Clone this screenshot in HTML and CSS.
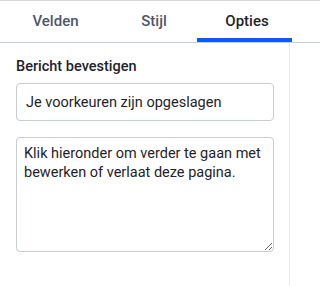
FILE: index.html
```html
<!DOCTYPE html>
<html lang="nl">
<head>
<meta charset="utf-8">
<link rel="stylesheet" href="styles.css">
</head>
<body>
<div class="panel">
  <div class="tabs">
    <div class="tab tab-velden">Velden</div>
    <div class="tab tab-stijl">Stijl</div>
    <div class="tab tab-opties active"><span class="tab-label">Opties</span></div>
  </div>
  <div class="content">
    <label class="field-label" for="msg">Bericht bevestigen</label>
    <input id="msg" class="text-input" type="text" value="Je voorkeuren zijn opgeslagen">
    <textarea class="text-area">Klik hieronder om verder te gaan met bewerken of verlaat deze pagina.</textarea>
  </div>
</div>
</body>
</html>
```
FILE: styles.css
```css
html, body {
  margin: 0;
  padding: 0;
  background: #ffffff;
  overflow: hidden;
}
body {
  font-family: Roboto, "Liberation Sans", sans-serif;
  color: #1f2329;
}
.panel {
  border-top: 1px solid #d7dae1;
  height: 285px;
  display: flex;
  flex-direction: column;
}
.tabs {
  display: flex;
  height: 41px;
  border-bottom: 1px solid #c9cdd6;
}
.tab {
  box-sizing: border-box;
  display: flex;
  align-items: center;
  justify-content: center;
  font-size: 15px;
  font-weight: 500;
  color: #4e566b;
  padding-bottom: 2px;
}
.tab-velden { width: 111px; }
.tab-stijl { width: 86px; }
.tab-opties { width: 95px; }
.tab-opties .tab-label { padding-left: 5px; }
.tab.active {
  color: #1f2329;
  border-bottom: 4px solid #0b5cf2;
  padding-bottom: 0;
  padding-top: 2px;
}
.content {
  flex: 1;
  width: 290px;
  box-sizing: border-box;
  border-right: 1px solid #e6e8ec;
  padding: 14px 16px 0 16px;
  display: flex;
  flex-direction: column;
}
.field-label {
  font-size: 14.5px;
  font-weight: 500;
  line-height: 20px;
  color: #1f2329;
  margin-bottom: 6px;
}
.text-input {
  box-sizing: border-box;
  width: 258px;
  height: 38px;
  border: 1px solid #c8ccd5;
  border-radius: 4px;
  padding: 0 9px;
  font-family: inherit;
  font-size: 14.5px;
  color: #1f2329;
  outline: none;
  margin: 0;
}
.text-area {
  box-sizing: border-box;
  width: 258px;
  height: 115px;
  margin: 16px 0 0 0;
  border: 1px solid #c8ccd5;
  border-radius: 4px;
  padding: 6px 7px;
  font-family: inherit;
  font-size: 14.5px;
  line-height: 19px;
  color: #1f2329;
  outline: none;
  resize: both;
}
```
